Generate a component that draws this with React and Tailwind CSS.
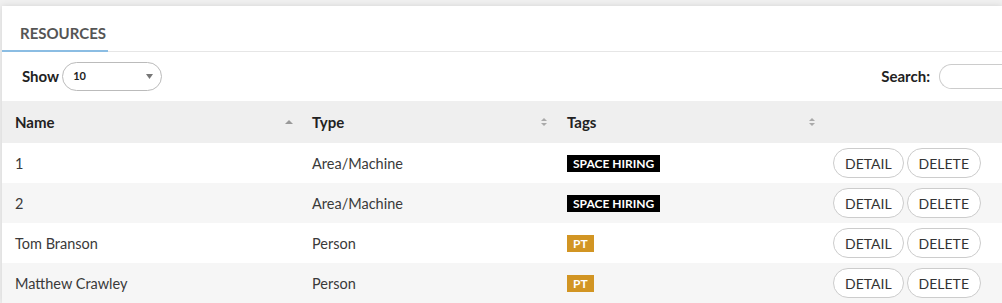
import React from 'react';

const rows = [
  { name: '1', type: 'Area/Machine', tag: 'SPACE HIRING', tagClass: 'bg-black' },
  { name: '2', type: 'Area/Machine', tag: 'SPACE HIRING', tagClass: 'bg-black' },
  { name: 'Tom Branson', type: 'Person', tag: 'PT', tagClass: 'bg-[#d29523]' },
  { name: 'Matthew Crawley', type: 'Person', tag: 'PT', tagClass: 'bg-[#d29523]' },
];

function SortUp() {
  return (
    <svg width="8" height="10" viewBox="0 0 8 10" className="shrink-0">
      <path d="M0 7 L4 3 L8 7 Z" fill="#999" />
    </svg>
  );
}

function SortBoth() {
  return (
    <svg width="8" height="10" viewBox="0 0 8 10" className="shrink-0">
      <path d="M1 4 L4 1 L7 4 Z" fill="#aaa" />
      <path d="M1 6 L4 9 L7 6 Z" fill="#aaa" />
    </svg>
  );
}

export default function App() {
  return (
    <div className="w-[1002px] h-[303px] overflow-hidden bg-[#f0f0f0] pl-[2px] pt-[6px] font-['Lato',sans-serif] text-[14.5px] text-[#3a3a3a]">
      <div className="bg-white h-full shadow-[0_0_6px_rgba(0,0,0,0.12)]">
        {/* Tabs */}
        <div className="flex h-[46px] border-b border-[#e6e6e6]">
          <div className="pt-[20px] leading-[15px] pl-[18px] pr-[2px] border-b-2 border-[#8bbde3] -mb-px text-[15px] font-bold text-[#555]">
            RESOURCES
          </div>
        </div>

        {/* Show / Search */}
        <div className="flex items-center justify-between h-[49px] pl-[20px]">
          <div className="flex items-center gap-[3px]">
            <span className="font-bold text-[15px] text-[#222]">Show</span>
            <div className="flex items-center justify-between w-[100px] h-[29px] rounded-full border border-[#bbb] pl-[10px] pr-[8px]">
              <span className="text-[11px] font-bold text-[#222]">10</span>
              <svg width="7" height="5" viewBox="0 0 7 5">
                <path d="M0 0 L7 0 L3.5 5 Z" fill="#777" />
              </svg>
            </div>
          </div>
          <div className="flex items-center gap-[9px]">
            <span className="font-bold text-[15px] text-[#222]">Search:</span>
            <div className="w-[63px] h-[25px] rounded-l-full border border-r-0 border-[#ccc]" />
          </div>
        </div>

        {/* Table header */}
        <div className="grid grid-cols-[297px_255px_268px_1fr] h-[42px] bg-[#efefef] font-bold text-[15px] text-[#222]">
          <div className="flex items-center justify-between pl-[13px] pr-[6px]">
            <span>Name</span>
            <SortUp />
          </div>
          <div className="flex items-center justify-between pl-[13px] pr-[6px]">
            <span>Type</span>
            <SortBoth />
          </div>
          <div className="flex items-center justify-between pl-[13px] pr-[6px]">
            <span>Tags</span>
            <SortBoth />
          </div>
          <div />
        </div>

        {/* Rows */}
        {rows.map((r, i) => (
          <div
            key={i}
            className={`grid grid-cols-[297px_255px_268px_1fr] h-[40px] items-center ${i % 2 ? 'bg-[#f6f6f6]' : 'bg-white'}`}
          >
            <div className="pl-[13px] pt-[2px]">{r.name}</div>
            <div className="pl-[13px] pt-[2px]">{r.type}</div>
            <div className="pl-[13px] flex">
              <span className={`${r.tagClass} text-white font-bold text-[12px] leading-[17px] h-[17px] px-[6px]`}>
                {r.tag}
              </span>
            </div>
            <div className="flex gap-[3px] pl-[11px]">
              <button className="h-[30px] px-[11px] rounded-full border border-[#ccc] bg-white text-[14px] text-[#333]">
                DETAIL
              </button>
              <button className="h-[30px] px-[11px] rounded-full border border-[#ccc] bg-white text-[14px] text-[#333]">
                DELETE
              </button>
            </div>
          </div>
        ))}
      </div>
    </div>
  );
}
